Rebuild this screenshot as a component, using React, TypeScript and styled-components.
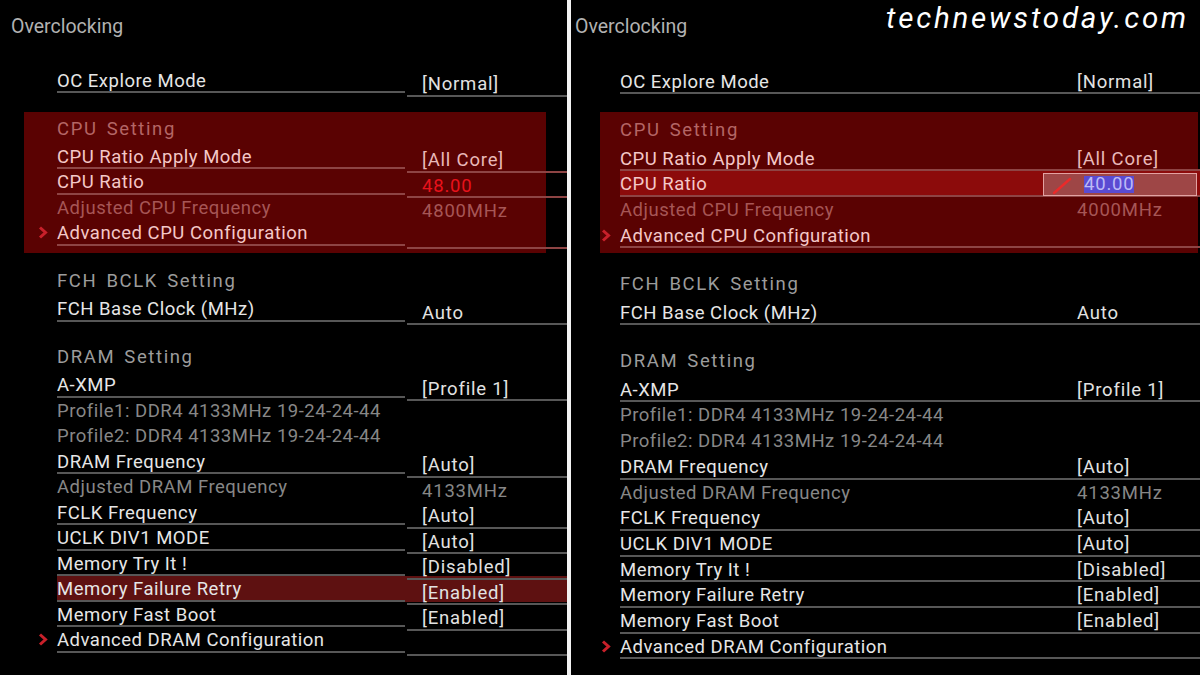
import React from 'react';
import styled, { createGlobalStyle, ThemeProvider } from 'styled-components';

const GlobalStyle = createGlobalStyle`
  html, body { margin: 0; padding: 0; background: #000; }
  body {
    width: 1200px; height: 675px; overflow: hidden;
    font-family: Roboto, "Noto Sans", sans-serif;
    -webkit-font-smoothing: antialiased;
  }
`;

type Metrics = {
  width: number;
  titleLeft: number;
  labelOffset: number;
  rowH: number;
  headerH: number;
  gap: number;
  padTop: number;
  titleGap: number;
  boxLeft: number;
  boxRight: number;
  boxPadTop: number;
  boxPadBottom: number;
  split: boolean;
  labelCol: number;
  valueIndent: number;
  valueShift: number;
};

const leftMetrics: Metrics = {
  width: 567, titleLeft: 11, labelOffset: 46, rowH: 25.5, headerH: 28, gap: 22.5,
  padTop: 13.75, titleGap: 29, boxLeft: 33, boxRight: 21, boxPadTop: 3.75, boxPadBottom: 7.25,
  split: true, labelCol: 348, valueIndent: 15, valueShift: 3.5,
};

const rightMetrics: Metrics = {
  width: 629, titleLeft: 4, labelOffset: 45, rowH: 25.7, headerH: 29, gap: 22.3,
  padTop: 13.75, titleGap: 30, boxLeft: 20, boxRight: 2, boxPadTop: 4.75, boxPadBottom: 4.95,
  split: false, labelCol: 457, valueIndent: 0, valueShift: 0,
};

const Page = styled.div`
  position: relative;
  display: flex;
  width: 1200px;
  height: 675px;
  background: #000;
  overflow: hidden;
`;

const Panel = styled.div`
  flex: 0 0 ${p => p.theme.width}px;
  box-sizing: border-box;
  padding: ${p => p.theme.padTop}px 0 0 ${p => p.theme.titleLeft}px;
  display: flex;
  flex-direction: column;
`;

const Divider = styled.div`
  flex: 0 0 4px;
  background: #f2f2f2;
`;

const Title = styled.div`
  font-size: 19.5px;
  line-height: 25px;
  height: 25px;
  color: #b2b2b2;
  margin-bottom: ${p => p.theme.titleGap}px;
`;

const Body = styled.div`
  margin-left: ${p => p.theme.labelOffset}px;
  display: flex;
  flex-direction: column;
  gap: ${p => p.theme.gap}px;
`;

const Section = styled.div<{ $boxed?: boolean }>`
  display: flex;
  flex-direction: column;
  --line: #575757;
  --label: #e6e6e6;
  --header: #9c9c9c;
  --dim: #878787;
  --value: #e2e2e2;
  ${p => p.$boxed && `
    --line: #8e4444;
    --label: #f4c8c8;
    --header: #b46666;
    --dim: #a65656;
    --value: #e9b9b9;
    background: #5a0202;
    margin: -${p.theme.boxPadTop}px ${p.theme.boxRight}px -${p.theme.boxPadBottom}px -${p.theme.boxLeft}px;
    padding: ${p.theme.boxPadTop}px 0 ${p.theme.boxPadBottom}px ${p.theme.boxLeft}px;
  `}
`;

const Rows = styled.div<{ $boxed?: boolean }>`
  display: flex;
  flex-direction: column;
  margin-right: ${p => (p.$boxed ? -p.theme.boxRight : 0)}px;
`;

const Header = styled.div`
  box-sizing: border-box;
  height: ${p => p.theme.headerH}px;
  padding-top: 1px;
  font-size: 18.5px;
  line-height: 25px;
  letter-spacing: 1.6px;
  word-spacing: 3px;
  color: var(--header);
`;

type Tone = 'normal' | 'dim' | 'alert';

const Row = styled.div<{ $select?: 'soft' | 'strong'; $lined: boolean }>`
  display: grid;
  grid-template-columns: ${p => p.theme.labelCol}px 1fr;
  column-gap: ${p => (p.theme.split ? 2 : 0)}px;
  height: ${p => p.theme.rowH}px;
  box-sizing: border-box;
  background: ${p => (p.$select === 'strong' ? '#8c0b0b' : p.$select === 'soft' ? '#5e1111' : 'transparent')};
  ${p => !p.theme.split && `border-bottom: 2px solid ${p.$lined ? 'var(--line)' : 'transparent'};`}
`;

const Cell = styled.div<{ $lined: boolean }>`
  box-sizing: border-box;
  height: ${p => p.theme.rowH}px;
  padding-top: 1px;
  display: flex;
  align-items: flex-start;
  font-size: 18.5px;
  letter-spacing: 0.5px;
  line-height: 24px;
  white-space: nowrap;
  ${p => p.theme.split && `border-bottom: 2px solid ${p.$lined ? 'var(--line)' : 'transparent'};`}
`;

const LabelCell = styled(Cell)<{ $tone: Tone }>`
  color: ${p => (p.$tone === 'dim' ? 'var(--dim)' : 'var(--label)')};
`;

const ValueCell = styled(Cell)<{ $tone: Tone }>`
  position: relative;
  margin-top: ${p => p.theme.valueShift}px;
  padding-left: ${p => p.theme.valueIndent}px;
  letter-spacing: 0.8px;
  color: ${p => (p.$tone === 'dim' ? 'var(--dim)' : p.$tone === 'alert' ? '#e8121c' : 'var(--value)')};
`;

const Chevron = styled.svg`
  flex: 0 0 10px;
  width: 10px;
  height: 13px;
  margin: 5px 9px 0 -19px;
`;

const EditBox = styled.div`
  display: flex;
  align-items: center;
  box-sizing: border-box;
  margin-left: -34px;
  margin-top: 0.5px;
  width: 154px;
  height: 23.5px;
  border: 1px solid #e3a2a2;
  background: #9e4646;
`;

const Pencil = styled.svg`
  width: 20px;
  height: 18px;
  margin: 3px 12px 0 8px;
`;

const Selected = styled.span`
  background: #5a4bd2;
  color: #bdbaf6;
  line-height: 17px;
  padding: 0;
`;

const Watermark = styled.div`
  position: absolute;
  top: 0.5px;
  left: 886px;
  font-family: Roboto, "Open Sans", sans-serif;
  font-style: italic;
  font-weight: 400;
  font-size: 29.5px;
  letter-spacing: 2.8px;
  line-height: 35px;
  color: #ffffff;
`;

type RowData = {
  label: string;
  value?: string;
  tone?: Tone;
  valueTone?: Tone;
  arrow?: boolean;
  select?: 'soft' | 'strong';
  edit?: boolean;
};

type SectionData = { header?: string; boxed?: boolean; rows: RowData[] };

const ChevronIcon = () => (
  <Chevron viewBox="0 0 10 13">
    <polyline points="2,1.5 7.5,6.5 2,11.5" fill="none" stroke="#c8202a" strokeWidth="3" />
  </Chevron>
);

const PencilIcon = () => (
  <Pencil viewBox="0 0 20 18">
    <line x1="2" y1="16" x2="18" y2="2" stroke="#ea2a2a" strokeWidth="2.4" strokeLinecap="round" />
  </Pencil>
);

const SettingRow = ({ r }: { r: RowData }) => {
  const lined = r.tone !== 'dim';
  return (
    <Row $select={r.select} $lined={lined}>
      <LabelCell $tone={r.tone ?? 'normal'} $lined={lined}>
        {r.arrow && <ChevronIcon />}
        {r.label}
      </LabelCell>
      <ValueCell $tone={r.valueTone ?? 'normal'} $lined={lined}>
        {r.edit ? (
          <EditBox>
            <PencilIcon />
            <Selected>{r.value}</Selected>
          </EditBox>
        ) : (
          r.value
        )}
      </ValueCell>
    </Row>
  );
};

const buildSections = (right: boolean): SectionData[] => [
  { rows: [{ label: 'OC Explore Mode', value: '[Normal]' }] },
  {
    header: 'CPU Setting',
    boxed: true,
    rows: [
      { label: 'CPU Ratio Apply Mode', value: '[All Core]' },
      right
        ? { label: 'CPU Ratio', value: '40.00', select: 'strong', edit: true }
        : { label: 'CPU Ratio', value: '48.00', valueTone: 'alert' },
      { label: 'Adjusted CPU Frequency', value: right ? '4000MHz' : '4800MHz', tone: 'dim', valueTone: 'dim' },
      { label: 'Advanced CPU Configuration', arrow: true },
    ],
  },
  {
    header: 'FCH BCLK Setting',
    rows: [{ label: 'FCH Base Clock (MHz)', value: 'Auto' }],
  },
  {
    header: 'DRAM Setting',
    rows: [
      { label: 'A-XMP', value: '[Profile 1]' },
      { label: 'Profile1: DDR4 4133MHz 19-24-24-44', tone: 'dim' },
      { label: 'Profile2: DDR4 4133MHz 19-24-24-44', tone: 'dim' },
      { label: 'DRAM Frequency', value: '[Auto]' },
      { label: 'Adjusted DRAM Frequency', value: '4133MHz', tone: 'dim', valueTone: 'dim' },
      { label: 'FCLK Frequency', value: '[Auto]' },
      { label: 'UCLK DIV1 MODE', value: '[Auto]' },
      { label: 'Memory Try It !', value: '[Disabled]' },
      { label: 'Memory Failure Retry', value: '[Enabled]', select: right ? undefined : 'soft' },
      { label: 'Memory Fast Boot', value: '[Enabled]' },
      { label: 'Advanced DRAM Configuration', arrow: true },
    ],
  },
];

const BiosPanel = ({ metrics, right }: { metrics: Metrics; right: boolean }) => (
  <ThemeProvider theme={metrics}>
    <Panel>
      <Title>Overclocking</Title>
      <Body>
        {buildSections(right).map((s, i) => (
          <Section key={i} $boxed={s.boxed}>
            {s.header && <Header>{s.header}</Header>}
            <Rows $boxed={s.boxed}>
              {s.rows.map((r, j) => (
                <SettingRow key={j} r={r} />
              ))}
            </Rows>
          </Section>
        ))}
      </Body>
    </Panel>
  </ThemeProvider>
);

export default function App() {
  return (
    <>
      <GlobalStyle />
      <Page>
        <BiosPanel metrics={leftMetrics} right={false} />
        <Divider />
        <BiosPanel metrics={rightMetrics} right={true} />
        <Watermark>technewstoday.com</Watermark>
      </Page>
    </>
  );
}
